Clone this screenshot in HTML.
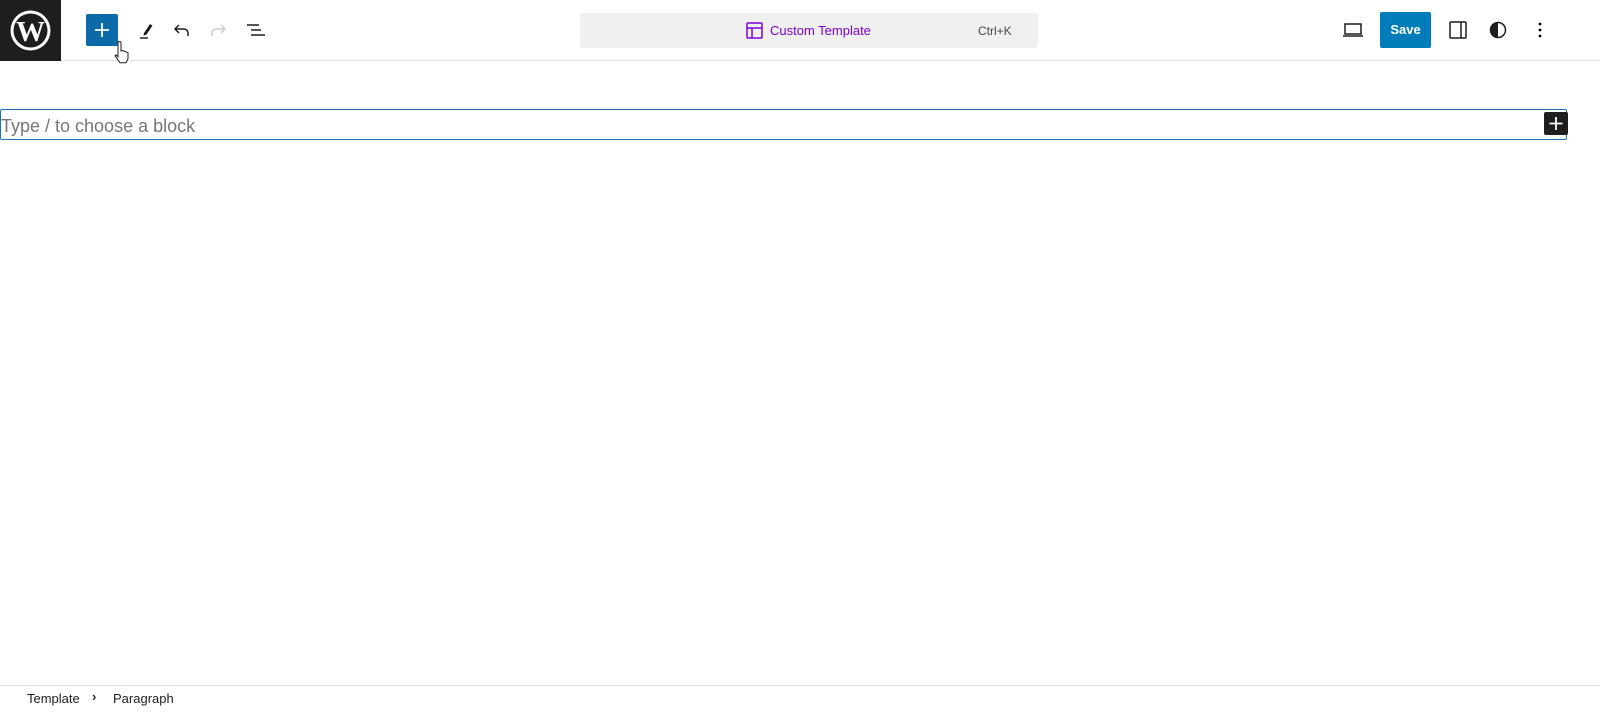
<!DOCTYPE html>
<html><head><style>
body{margin:0;width:1600px;height:724px;background:#fff;font-family:"Liberation Sans",sans-serif;position:relative;overflow:hidden}
.a{position:absolute}
svg{display:block}
</style></head><body>
<div class="a" style="left:0;top:0;width:1600px;height:60px;border-bottom:1px solid #e0e0e0"></div>
<div class="a" style="left:0;top:0;width:61px;height:61px;background:#1e1e1e">
<svg width="61" height="61" viewBox="0 0 61 61"><circle cx="30.5" cy="30.5" r="20" fill="#fff"/><circle cx="30.5" cy="30.5" r="17" fill="#1e1e1e"/><text x="30.5" y="41" text-anchor="middle" font-family="Liberation Serif" font-weight="bold" font-size="29" fill="#fff">W</text></svg></div>
<div class="a" style="left:86px;top:14px;width:32px;height:32px;background:#0c6aa8;border-radius:2px"><svg width="32" height="32"><path d="M16 9v14M9 16h14" stroke="#fff" stroke-width="1.8"/></svg></div>
<svg class="a" style="left:134px;top:18px" width="24" height="24"><path d="M10 15l6-9 2.5 1.6-6 9-3 1z" fill="#1e1e1e"/><path d="M6 20h8" stroke="#1e1e1e" stroke-width="1.5"/></svg>
<svg class="a" style="left:170px;top:18px" width="24" height="24"><path d="M18 18v-3a4 4 0 0 0-4-4H6M9 7l-4 4 4 4" stroke="#1e1e1e" stroke-width="1.5" fill="none"/></svg>
<svg class="a" style="left:206px;top:18px" width="24" height="24"><path d="M6 18v-3a4 4 0 0 1 4-4h8M15 7l4 4-4 4" stroke="#ccc" stroke-width="1.5" fill="none"/></svg>
<svg class="a" style="left:244px;top:18px" width="24" height="24"><path d="M3 7h12M7 12h10M7 17h14" stroke="#1e1e1e" stroke-width="1.5"/></svg>
<svg class="a" style="left:112px;top:40px" width="20" height="26"><path d="M6 3a1.5 1.5 0 0 1 3 0v8l1-.5 2 .5 2 .8 2 1v6l-2 4H8l-5-7 1-1 2 2z" fill="#fff" stroke="#1e1e1e" stroke-width="1"/></svg>
<div class="a" style="left:580px;top:13px;width:458px;height:35px;background:#f0f0f0;border-radius:3px"></div>
<svg class="a" style="left:745px;top:21px" width="20" height="20"><rect x="2" y="2" width="15" height="15" rx="1" fill="none" stroke="#7a00df" stroke-width="1.5"/><path d="M2 7h15M7 7v10" stroke="#7a00df" stroke-width="1.5"/></svg>
<div class="a" style="left:770px;top:23px;font-size:13px;color:#7a00df">Custom Template</div>
<div class="a" style="left:978px;top:24px;font-size:12px;color:#444">Ctrl+K</div>
<svg class="a" style="left:1341px;top:18px" width="24" height="24"><rect x="4" y="6" width="16" height="10" fill="none" stroke="#1e1e1e" stroke-width="1.5"/><path d="M2 18h20" stroke="#1e1e1e" stroke-width="1.5"/></svg>
<div class="a" style="left:1380px;top:12px;width:51px;height:36px;background:#007cba;border-radius:2px;color:#fff;font-size:13px;font-weight:bold;line-height:36px;text-align:center">Save</div>
<svg class="a" style="left:1446px;top:18px" width="24" height="24"><rect x="4" y="4" width="16" height="16" rx="1" fill="none" stroke="#1e1e1e" stroke-width="1.5"/><path d="M15 4v16" stroke="#1e1e1e" stroke-width="1.5"/></svg>
<svg class="a" style="left:1486px;top:18px" width="24" height="24"><circle cx="12" cy="12" r="7.5" fill="none" stroke="#1e1e1e" stroke-width="1.5"/><path d="M12 4.5a7.5 7.5 0 0 0 0 15z" fill="#1e1e1e"/></svg>
<svg class="a" style="left:1528px;top:18px" width="24" height="24"><circle cx="12" cy="6" r="1.4"/><circle cx="12" cy="12" r="1.4"/><circle cx="12" cy="18" r="1.4"/></svg>
<div class="a" style="left:0;top:109px;width:1565px;height:29px;border:1.5px solid #1a73b8;border-radius:2px"></div>
<div class="a" style="left:1px;top:116px;font-size:18px;color:#777">Type / to choose a block</div>
<div class="a" style="left:1544px;top:112px;width:24px;height:23px;background:#1e1e1e;border-radius:2px"><svg width="24" height="23"><path d="M12 5v13M5.5 11.5h13" stroke="#fff" stroke-width="1.8"/></svg></div>
<div class="a" style="left:0;top:685px;width:1600px;height:1px;background:#e0e0e0"></div>
<div class="a" style="left:27px;top:691px;font-size:13px;color:#1e1e1e">Template</div>
<div class="a" style="left:92px;top:689px;font-size:13px;color:#1e1e1e;font-weight:bold">›</div>
<div class="a" style="left:113px;top:691px;font-size:13px;color:#1e1e1e">Paragraph</div>
</body></html>
